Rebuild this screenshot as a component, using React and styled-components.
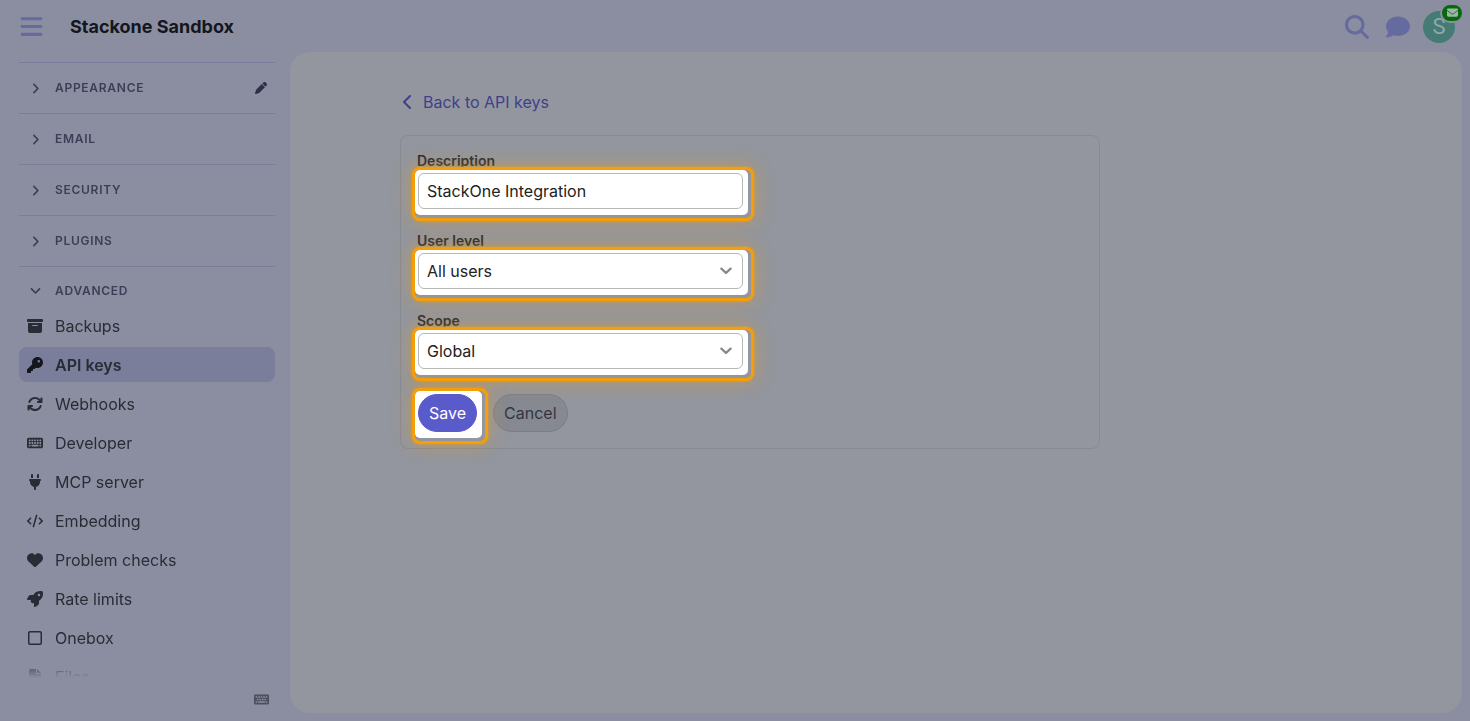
import React, { useState } from "react";
import styled, { createGlobalStyle } from "styled-components";
import { FaKeyboard as FaKeyboardSolid } from "react-icons/fa";
import {
  FaAngleDown,
  FaAngleRight,
  FaArrowsRotate,
  FaBars,
  FaBoxArchive,
  FaChevronLeft,
  FaCode,
  FaComment,
  FaEnvelope,
  FaFile,
  FaHeart,
  FaKey,
  FaKeyboard,
  FaMagnifyingGlass,
  FaPen,
  FaPlug,
  FaRegSquare,
  FaRocket,
} from "react-icons/fa6";

const sections = [
  { name: "Appearance", editable: true },
  { name: "Email" },
  { name: "Security" },
  { name: "Plugins" },
];

const links = [
  { name: "Backups", icon: FaBoxArchive },
  { name: "API keys", icon: FaKey, active: true },
  { name: "Webhooks", icon: FaArrowsRotate },
  { name: "Developer", icon: FaKeyboard },
  { name: "MCP server", icon: FaPlug },
  { name: "Embedding", icon: FaCode },
  { name: "Problem checks", icon: FaHeart },
  { name: "Rate limits", icon: FaRocket },
  { name: "Onebox", icon: FaRegSquare },
  { name: "Files", icon: FaFile },
];

const Header = () => (
  <HeaderBar>
    <IconButton aria-label="Toggle sidebar">
      <FaBars size={25} />
    </IconButton>
    <SiteTitle href="#">Stackone Sandbox</SiteTitle>
    <HeaderIcons>
      <IconButton aria-label="Search">
        <FaMagnifyingGlass size={24} />
      </IconButton>
      <IconButton aria-label="Chat">
        <FaComment size={24} />
      </IconButton>
      <Avatar aria-label="Notifications and account">
        S
        <Badge>
          <FaEnvelope size={11} />
        </Badge>
      </Avatar>
    </HeaderIcons>
  </HeaderBar>
);

const Sidebar = () => (
  <SidebarWrapper>
    <SidebarScroll>
      {sections.map((section) => (
        <SectionRow key={section.name}>
          <SectionToggle>
            <IconSlot>
              <FaAngleRight size={13} />
            </IconSlot>
            {section.name}
          </SectionToggle>
          {section.editable && (
            <EditButton aria-label="Edit">
              <FaPen size={12} />
            </EditButton>
          )}
        </SectionRow>
      ))}
      <SectionRow $open>
        <SectionToggle>
          <IconSlot>
            <FaAngleDown size={13} />
          </IconSlot>
          Advanced
        </SectionToggle>
      </SectionRow>
      <LinkList>
        {links.map(({ name, icon: Icon, active }) => (
          <li key={name}>
            <SidebarLink href="#" $active={active}>
              <IconSlot>
                <Icon size={16} />
              </IconSlot>
              {name}
            </SidebarLink>
          </li>
        ))}
      </LinkList>
    </SidebarScroll>
    <SidebarFooter>
      <EditButton aria-label="Keyboard shortcuts">
        <FaKeyboardSolid size={15} />
      </EditButton>
    </SidebarFooter>
  </SidebarWrapper>
);

const Caret = () => (
  <svg width="12" height="8" viewBox="0 0 12 8" fill="none">
    <path
      d="M1.4 1.6 6 6l4.6-4.4"
      stroke="currentColor"
      strokeWidth="2.3"
      strokeLinecap="round"
      strokeLinejoin="round"
    />
  </svg>
);

const ApiKeyForm = () => {
  const [description, setDescription] = useState("StackOne Integration");
  const [level, setLevel] = useState("all");
  const [scope, setScope] = useState("global");

  return (
    <Form onSubmit={(e) => e.preventDefault()}>
      <Field>
        <Label htmlFor="description">Description</Label>
        <Highlight>
          <Spot>
            <Input
              id="description"
              value={description}
              onChange={(e) => setDescription(e.target.value)}
            />
          </Spot>
        </Highlight>
      </Field>
      <Field>
        <Label htmlFor="level">User level</Label>
        <Highlight>
          <Spot>
            <SelectBox>
              <Select
                id="level"
                value={level}
                onChange={(e) => setLevel(e.target.value)}
              >
                <option value="all">All users</option>
                <option value="single">Single user</option>
              </Select>
              <Caret />
            </SelectBox>
          </Spot>
        </Highlight>
      </Field>
      <Field>
        <Label htmlFor="scope">Scope</Label>
        <Highlight>
          <Spot>
            <SelectBox>
              <Select
                id="scope"
                value={scope}
                onChange={(e) => setScope(e.target.value)}
              >
                <option value="global">Global</option>
                <option value="read_only">Read-only</option>
                <option value="granular">Granular</option>
              </Select>
              <Caret />
            </SelectBox>
          </Spot>
        </Highlight>
      </Field>
      <Actions>
        <Highlight $fit>
          <Spot>
            <Button $primary type="submit">
              Save
            </Button>
          </Spot>
        </Highlight>
        <CancelButton type="button">Cancel</CancelButton>
      </Actions>
    </Form>
  );
};

const App = () => (
  <>
    <GlobalStyle />
    <Page>
      <Header />
      <Body>
        <Sidebar />
        <Main>
          <Content>
            <BackLink href="#">
              <FaChevronLeft size={16} />
              Back to API keys
            </BackLink>
            <ApiKeyForm />
          </Content>
        </Main>
      </Body>
    </Page>
  </>
);

const GlobalStyle = createGlobalStyle`
  * {
    box-sizing: border-box;
  }
  body {
    margin: 0;
    background: #8b8ea0;
    color: #292c35;
    font-family: Inter, "Liberation Sans", sans-serif;
    font-size: 16px;
    line-height: 20px;
  }
  button,
  input,
  select {
    font: inherit;
    color: inherit;
    margin: 0;
  }
  button {
    border: 0;
    padding: 0;
    background: none;
    cursor: pointer;
  }
  a {
    color: inherit;
    text-decoration: none;
  }
`;

const Page = styled.div`
  height: 100vh;
  display: flex;
  flex-direction: column;
`;

const HeaderBar = styled.header`
  flex: none;
  height: 52px;
  display: flex;
  align-items: center;
  padding: 1px 15px 0 19px;
`;

const IconButton = styled.button`
  display: flex;
  color: #666b9f;
`;

const SiteTitle = styled.a`
  margin-left: 26px;
  font-size: 18px;
  font-weight: 700;
  color: #14161e;
`;

const HeaderIcons = styled.div`
  margin-left: auto;
  display: flex;
  align-items: center;
  gap: 17px;
`;

const Avatar = styled.button`
  position: relative;
  margin-left: -4px;
  width: 32px;
  height: 32px;
  border-radius: 50%;
  background: #457b74;
  color: #8fa8a8;
  font-family: Roboto, sans-serif;
  font-size: 22px;
`;

const Badge = styled.span`
  position: absolute;
  top: -8px;
  right: -9px;
  width: 24px;
  height: 20px;
  display: flex;
  align-items: center;
  justify-content: center;
  border: 2px solid #8b8ea0;
  border-radius: 10px;
  background: #07680f;
  color: #9fb5a4;
`;

const Body = styled.div`
  flex: 1;
  min-height: 0;
  display: grid;
  grid-template-columns: 290px 1fr;
  padding: 0 8px 8px 0;
`;

const SidebarWrapper = styled.nav`
  min-height: 0;
  display: flex;
  flex-direction: column;
  padding: 10px 15px 0 19px;
`;

const SidebarScroll = styled.div`
  flex: 1;
  min-height: 0;
  overflow: hidden;
  mask-image: linear-gradient(to top, transparent, #000 20px);
`;

const SectionRow = styled.div`
  display: flex;
  align-items: center;
  height: ${({ $open }) => ($open ? "42px" : "51px")};
  padding: ${({ $open }) => ($open ? "6px 8px 0" : "0 8px")};
  border-top: 1px solid #7b7e9b;
`;

const SectionToggle = styled.button`
  flex: 1;
  display: flex;
  align-items: center;
  gap: 12px;
  color: #3b3e56;
  font-size: 12px;
  font-weight: 600;
  letter-spacing: 0.06em;
  text-transform: uppercase;
`;

const IconSlot = styled.span`
  flex: none;
  width: 16px;
  display: flex;
  justify-content: center;
`;

const EditButton = styled.button`
  display: flex;
  color: #2c2f48;
`;

const LinkList = styled.ul`
  list-style: none;
  margin: 0;
  padding: 0;
  display: flex;
  flex-direction: column;
  gap: 4px;
`;

const SidebarLink = styled.a`
  display: flex;
  align-items: center;
  gap: 12px;
  height: 35px;
  padding: 0 8px;
  border-radius: 8px;
  background: ${({ $active }) => ($active ? "#7b7e9b" : "transparent")};
  font-weight: ${({ $active }) => ($active ? 600 : 400)};

  svg {
    color: ${({ $active }) => ($active ? "#14161e" : "inherit")};
  }
`;

const SidebarFooter = styled.div`
  flex: none;
  height: 35px;
  display: flex;
  align-items: center;
  justify-content: flex-end;
  padding: 8px 6px 0;

  button {
    color: #4c4f5e;
  }
`;

const Main = styled.main`
  min-width: 0;
  border-radius: 20px;
  background: #93969e;
`;

const Content = styled.div`
  max-width: 952px;
  margin: 0 auto;
  padding: 40px 0;
`;

const BackLink = styled.a`
  display: inline-flex;
  align-items: center;
  gap: 7px;
  color: #3f3f8c;
`;

const Form = styled.form`
  max-width: 700px;
  margin-top: 21px;
  padding: 15px 16px 4px;
  border: 1px solid #888b94;
  border-radius: 8px;
  display: flex;
  flex-direction: column;
  gap: 10px;
`;

const Field = styled.div`
  display: flex;
  flex-direction: column;
`;

const Label = styled.label`
  font-size: 14px;
  font-weight: 600;
`;

const Highlight = styled.div`
  position: relative;
  width: ${({ $fit }) => ($fit ? "auto" : "342px")};
  max-width: 100%;
  margin: ${({ $fit }) => ($fit ? "0 5px 0 -5px" : "-4px 0 0 -5px")};
  padding: 0 3px 3px 0;
  border: 3px solid #f59e0b;
  border-radius: 8px;
  background: #93969e;
  box-shadow: 0 0 20px rgba(245, 158, 11, 0.4), 0 0 3px rgba(245, 158, 11, 0.9);
`;

const Spot = styled.div`
  padding: 3px 5px 6px 3px;
  border-radius: 5px;
  background: #fff;
`;

const Input = styled.input`
  display: block;
  width: 100%;
  height: 36px;
  padding: 0 8px;
  border: 1px solid #b8b8b8;
  border-radius: 6px;
  background: #fff;
  color: #222;
  outline: none;
`;

const SelectBox = styled.div`
  display: grid;
  align-items: center;

  > * {
    grid-area: 1 / 1;
  }
  svg {
    justify-self: end;
    margin-right: 11px;
    color: #888;
    pointer-events: none;
  }
`;

const Select = styled(Input).attrs({ as: "select" })`
  appearance: none;
`;

const Actions = styled.div`
  display: flex;
  align-items: flex-start;
  margin-top: -3px;
`;

const Button = styled.button`
  height: 38px;
  padding: 0 10px;
  border: 1px solid ${({ $primary }) => ($primary ? "#5a5bcb" : "#7b7e86")};
  border-radius: 19px;
  background: ${({ $primary }) => ($primary ? "#5a5bcb" : "#868991")};
  color: ${({ $primary }) => ($primary ? "#fff" : "#33363f")};
`;

const CancelButton = styled(Button)`
  margin-top: 6px;
`;

export default App;
